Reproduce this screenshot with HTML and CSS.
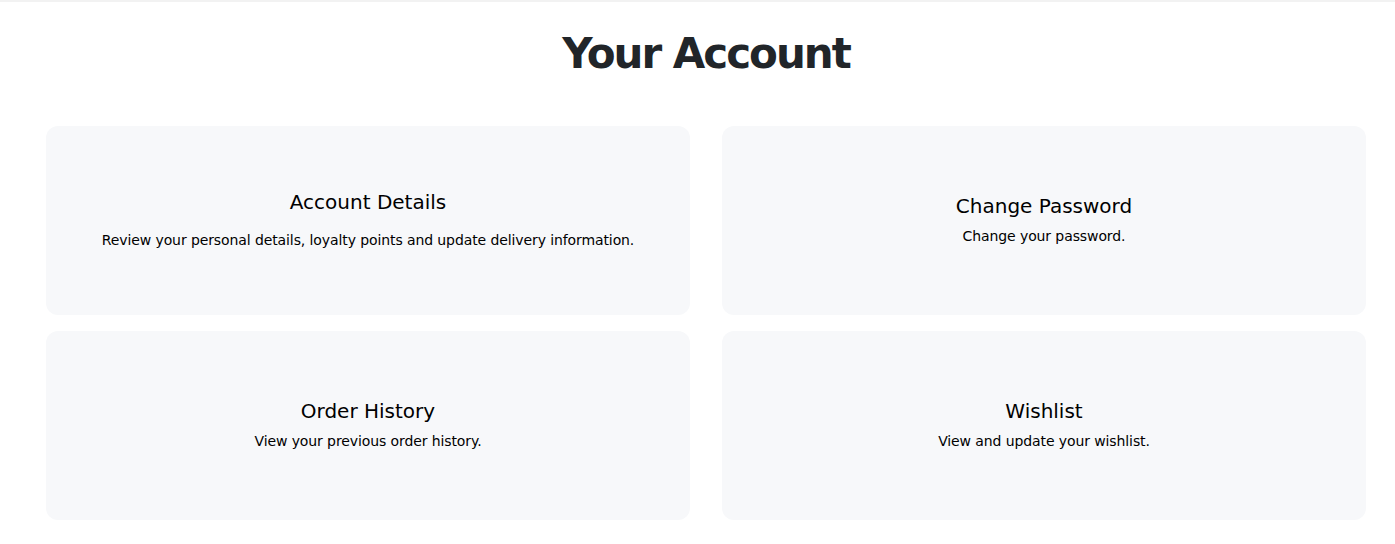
FILE: index.html
```html
<!DOCTYPE html>
<html lang="en">
<head>
<meta charset="utf-8">
<title>Your Account</title>
<link rel="stylesheet" href="styles.css">
</head>
<body>
<div class="topline"></div>
<main class="account">
  <h1 class="account-title">Your Account</h1>
  <div class="account-grid">
    <a class="card card-wide" href="#">
      <h2 class="card-title">Account Details</h2>
      <p class="card-text">Review your personal details, loyalty points and update delivery information.</p>
    </a>
    <a class="card" href="#">
      <h2 class="card-title">Change Password</h2>
      <p class="card-text">Change your password.</p>
    </a>
    <a class="card" href="#">
      <h2 class="card-title">Order History</h2>
      <p class="card-text">View your previous order history.</p>
    </a>
    <a class="card" href="#">
      <h2 class="card-title">Wishlist</h2>
      <p class="card-text">View and update your wishlist.</p>
    </a>
  </div>
</main>
</body>
</html>
```

FILE: styles.css
```css
* { box-sizing: border-box; }
html, body { margin: 0; padding: 0; background: #ffffff; }
body {
  font-family: "DejaVu Sans", "Noto Sans", sans-serif;
  color: #000;
}
.topline {
  height: 2px;
  background: #f2f2f2;
}
.account {
  width: 1320px;
  margin-left: 46px;
  padding-top: 24px;
}
.account-title {
  margin: 0;
  text-align: center;
  font-size: 42px;
  line-height: 56px;
  font-weight: 800;
  color: #212529;
  letter-spacing: -2px;
}
.account-grid {
  margin-top: 44px;
  display: grid;
  grid-template-columns: 1fr 1fr;
  column-gap: 32px;
  row-gap: 16px;
}
.card {
  height: 189px;
  padding-bottom: 2px;
  background: #f7f8fa;
  border-radius: 12px;
  display: flex;
  flex-direction: column;
  align-items: center;
  justify-content: center;
  text-decoration: none;
  color: #000;
}
.card-title {
  margin: 0;
  font-size: 20px;
  line-height: 24px;
  font-weight: 400;
}
.card-text {
  margin: 8px 0 0;
  font-size: 14px;
  line-height: 20px;
  letter-spacing: -0.1px;
}
.card-wide .card-text {
  margin-top: 16px;
}
```
